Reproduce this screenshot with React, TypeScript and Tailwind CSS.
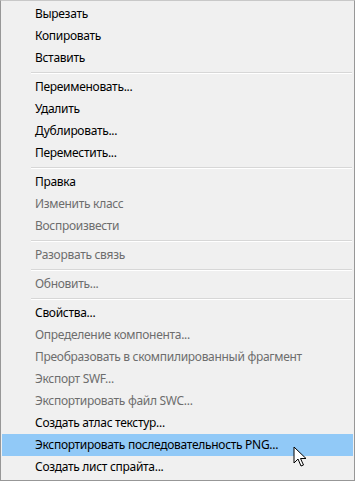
type Item = { label: string; disabled?: boolean; active?: boolean } | 'sep'

const items: Item[] = [
  { label: 'Вырезать' },
  { label: 'Копировать' },
  { label: 'Вставить' },
  'sep',
  { label: 'Переименовать...' },
  { label: 'Удалить' },
  { label: 'Дублировать...' },
  { label: 'Переместить...' },
  'sep',
  { label: 'Правка' },
  { label: 'Изменить класс', disabled: true },
  { label: 'Воспроизвести', disabled: true },
  'sep',
  { label: 'Разорвать связь', disabled: true },
  'sep',
  { label: 'Обновить...', disabled: true },
  'sep',
  { label: 'Свойства...' },
  { label: 'Определение компонента...', disabled: true },
  { label: 'Преобразовать в скомпилированный фрагмент', disabled: true },
  { label: 'Экспорт SWF...', disabled: true },
  { label: 'Экспортировать файл SWC...', disabled: true },
  { label: 'Создать атлас текстур...' },
  { label: 'Экспортировать последовательность PNG...', active: true },
  { label: 'Создать лист спрайта...' },
]

function Cursor() {
  return (
    <svg className="absolute left-[292px] top-[445px]" width="14" height="22" viewBox="0 0 14 22">
      <path d="M1 1 L1 17 L5 13 L8 20 L10.5 19 L7.5 12.5 L13 12.5 Z" fill="#fff" stroke="#000" strokeWidth="1" strokeLinejoin="miter" />
    </svg>
  )
}

export default function App() {
  return (
    <div className="relative w-[355px] h-[481px] bg-[#f0f0f0] border border-[#979797] border-t-[#c8c8c8] py-[2px] px-[1px] font-['Noto_Sans',sans-serif] text-[12px] tracking-[-0.3px] leading-none">
      {items.map((it, i) =>
        it === 'sep' ? (
          <div key={i} className="h-[7px] flex flex-col justify-center pl-[29px] pr-[1px]">
            <div className="h-px bg-[#d7d7d7]" />
            <div className="h-px bg-white" />
          </div>
        ) : (
          <div
            key={i}
            className={`h-[22px] flex items-center pl-[33px] ${it.active ? 'bg-[#91c9f7]' : ''} ${it.disabled ? 'text-[#6d6d6d]' : 'text-black'}`}
          >
            {it.label}
          </div>
        )
      )}
      <Cursor />
    </div>
  )
}
